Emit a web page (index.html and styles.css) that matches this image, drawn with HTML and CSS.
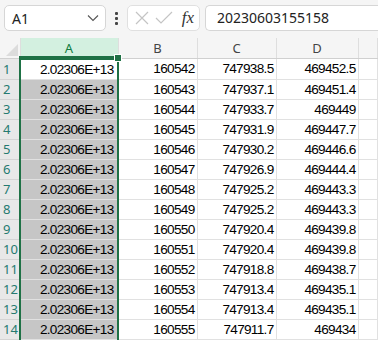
FILE: index.html
```html
<!DOCTYPE html>
<html lang="en">
<head>
<meta charset="UTF-8" />
<title>Sheet</title>
<link rel="stylesheet" href="styles.css">
</head>
<body>

<div class="toolbar">
  <div class="namebox">
    <span>A1</span>
    <svg class="chev" width="12" height="8" viewBox="0 0 12 8"><path d="M1 1.5 L6 6.5 L11 1.5" fill="none" stroke="#555" stroke-width="1.1"/></svg>
  </div>
  <div class="dots"><i></i><i></i><i></i></div>
  <div class="fxbox">
    <svg width="16" height="16" viewBox="0 0 16 16"><path d="M2 2 L14 14 M14 2 L2 14" stroke="#c4c4c4" stroke-width="1.2"/></svg>
    <svg width="18" height="16" viewBox="0 0 18 16"><path d="M1 8 L6 13 L17 2" fill="none" stroke="#c4c4c4" stroke-width="1.2"/></svg>
    <span class="fx">fx</span>
  </div>
  <div class="formula">20230603155158</div>
</div>

<div class="sheet">
  <table class="grid">
    <colgroup>
      <col class="c-head"><col class="c-a"><col class="c-b"><col class="c-c"><col class="c-d"><col>
    </colgroup>
    <thead>
      <tr>
        <th class="corner"><svg width="12" height="12" viewBox="0 0 12 12"><path d="M12 0 L12 12 L0 12 Z" fill="#dcdcdc"/></svg></th>
        <th class="sel">A</th><th>B</th><th>C</th><th>D</th><th></th>
      </tr>
    </thead>
    <tbody id="rows"></tbody>
  </table>
  <div class="selection"><div class="handle"></div></div>
</div>

<script>
  // dati delle righe: B, C, D
  const data = [
    ['160542', '747938.5', '469452.5'],
    ['160543', '747937.1', '469451.4'],
    ['160544', '747933.7', '469449'],
    ['160545', '747931.9', '469447.7'],
    ['160546', '747930.2', '469446.6'],
    ['160547', '747926.9', '469444.4'],
    ['160548', '747925.2', '469443.3'],
    ['160549', '747925.2', '469443.3'],
    ['160550', '747920.4', '469439.8'],
    ['160551', '747920.4', '469439.8'],
    ['160552', '747918.8', '469438.7'],
    ['160553', '747913.4', '469435.1'],
    ['160554', '747913.4', '469435.1'],
    ['160555', '747911.7', '469434']
  ];
  const tbody = document.getElementById('rows');
  data.forEach((r, i) => {
    const tr = document.createElement('tr');
    const aClass = i === 0 ? 'a active' : 'a';
    tr.innerHTML = '<th>' + (i + 1) + '</th>' +
      '<td class="' + aClass + '">2.02306E+13</td>' +
      '<td>' + r[0] + '</td><td>' + r[1] + '</td><td>' + r[2] + '</td><td></td>';
    tbody.appendChild(tr);
  });
</script>

</body>
</html>
```

FILE: styles.css
```css
body {
  margin: 0;
  background: #f5f5f5;
  font-family: "Liberation Sans", Arial, sans-serif;
  overflow: hidden;
}

/* --- barra formula --- */
.toolbar {
  display: flex;
  align-items: center;
  height: 26px;
  padding: 5px 0 7px 4px;
  font-family: "Noto Sans", "Open Sans", sans-serif;
  font-size: 14px;
  color: #222;
}
.namebox {
  box-sizing: border-box;
  width: 102px;
  height: 26px;
  background: #fff;
  border: 1px solid #d6d6d6;
  border-radius: 5px;
  display: flex;
  align-items: center;
  justify-content: space-between;
  padding: 0 6px 0 7px;
}
.dots {
  width: 21px;
  display: flex;
  flex-direction: column;
  align-items: center;
  gap: 2px;
}
.dots i {
  width: 3px;
  height: 3px;
  background: #444;
  border-radius: 1px;
}
.fxbox {
  box-sizing: border-box;
  width: 73px;
  height: 26px;
  background: #fff;
  border: 1px solid #e0e0e0;
  border-radius: 5px;
  display: flex;
  align-items: center;
  padding: 0 5px 0 6px;
  gap: 5px;
}
.fx {
  font-family: "Liberation Serif", serif;
  font-style: italic;
  font-size: 17px;
  color: #333;
  margin-left: auto;
}
.formula {
  box-sizing: border-box;
  flex: 1;
  height: 26px;
  margin-left: 5px;
  background: #fff;
  border: 1px solid #d6d6d6;
  border-right: none;
  border-radius: 5px 0 0 5px;
  padding-left: 11px;
  line-height: 24px;
}

/* --- griglia --- */
.sheet {
  position: relative;
  background: #fff;
  height: 302px;
  overflow: hidden;
}
.grid {
  border-collapse: collapse;
  table-layout: fixed;
  width: 100%;
  font-size: 13.6px;
  letter-spacing: -0.7px;
  color: #000;
}
.c-head { width: 20px; }
.c-a { width: 98px; }
.c-b { width: 79px; }
.c-c { width: 79px; }
.c-d { width: 82px; }

.grid thead th {
  height: 18px;
  padding: 0;
  background: #f5f5f5;
  border-right: 1px solid #dedede;
  border-bottom: 1px solid #d0d0d0;
  font-family: "Noto Sans", "Open Sans", sans-serif;
  font-weight: normal;
  font-size: 13px;
  letter-spacing: 0;
  color: #444;
}
.grid thead th.corner {
  text-align: right;
  vertical-align: bottom;
  padding: 0 2px 2px 0;
  line-height: 0;
}
.grid thead th.sel {
  background: #d3f0e0;
  color: #107c41;
  border-bottom: 2px solid #1e7145;
}
.grid tbody th {
  height: 19px;
  padding: 0 0 0 3px;
  background: #e8e8e8;
  border-right: 1px solid #d4d4d4;
  border-bottom: 1px solid #d4d4d4;
  text-align: left;
  font-family: "Noto Sans", "Open Sans", sans-serif;
  font-weight: normal;
  font-size: 13px;
  letter-spacing: 0;
  color: #257a70;
}
.grid td {
  height: 19px;
  padding: 0 2px 0 0;
  text-align: right;
  border-right: 1px solid #e1e1e1;
  border-bottom: 1px solid #e1e1e1;
  white-space: nowrap;
  overflow: hidden;
}
.grid td.a {
  background: #c6c6c6;
  padding-right: 4px;
}
.grid td.a.active {
  background: #fff;
}

/* bordo verde della colonna selezionata */
.selection {
  position: absolute;
  left: 19px;
  top: 18px;
  width: 96px;
  height: 290px;
  border: 2px solid #1e7145;
  border-bottom: none;
}
.handle {
  position: absolute;
  right: -5px;
  top: -4px;
  width: 6px;
  height: 6px;
  background: #1e7145;
  border: 1px solid #fff;
}
```
